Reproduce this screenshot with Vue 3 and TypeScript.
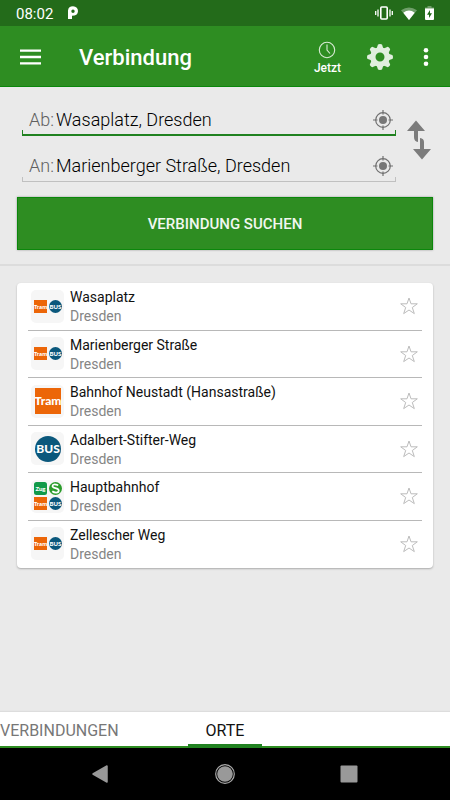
<script setup lang="ts">
import { ref } from 'vue'

type Mode = 'tram' | 'bus' | 'zug' | 'sbahn'

interface Stop {
  name: string
  city: string
  modes: Mode[]
}

const from = ref('Wasaplatz, Dresden')
const to = ref('Marienberger Straße, Dresden')
const tab = ref<'verbindungen' | 'orte'>('orte')

const stops: Stop[] = [
  { name: 'Wasaplatz', city: 'Dresden', modes: ['tram', 'bus'] },
  { name: 'Marienberger Straße', city: 'Dresden', modes: ['tram', 'bus'] },
  { name: 'Bahnhof Neustadt (Hansastraße)', city: 'Dresden', modes: ['tram'] },
  { name: 'Adalbert-Stifter-Weg', city: 'Dresden', modes: ['bus'] },
  { name: 'Hauptbahnhof', city: 'Dresden', modes: ['zug', 'sbahn', 'tram', 'bus'] },
  { name: 'Zellescher Weg', city: 'Dresden', modes: ['tram', 'bus'] },
]

function swap(): void {
  const previous = from.value
  from.value = to.value
  to.value = previous
}
</script>

<template>
  <div class="screen">
    <div class="status">
      <span class="clock">08:02</span>
      <svg class="parking" width="12" height="14" viewBox="0 0 12 14" aria-hidden="true">
        <path fill-rule="evenodd" d="M1 13V4.500Q1.500 .3 6 .3Q11 .7 11 5.300Q10.800 9.800 5 9.800V13ZM6 3.500A1.700 1.700 0 1 0 6 6.900A1.700 1.700 0 1 0 6 3.500Z" fill="#fff" />
      </svg>
      <span class="grow"></span>
      <svg width="18" height="14" viewBox="0 0 18 14" aria-hidden="true">
        <rect x="5.800" y="1" width="6.400" height="12" rx="1" fill="none" stroke="#fff" stroke-width="1.600" />
        <path d="M.7 5v4M3 3.500v7M15 3.500v7M17.300 5v4" stroke="#fff" stroke-width="1.300" />
      </svg>
      <svg class="wifi" width="16" height="13" viewBox="0 0 16 13" aria-hidden="true">
        <path d="M0 3.300Q8-2.300 16 3.300L8 13Z" fill="#fff" opacity=".35" />
        <path d="M2.300 5.800Q8 1.200 13.700 5.800L8 13Z" fill="#fff" />
      </svg>
      <svg width="9" height="14" viewBox="0 0 9 14" aria-hidden="true">
        <path d="M2.500 0H6.500V1.500H9V3H0V1.500H2.500Z" fill="#fff" opacity=".35" />
        <path d="M0 2.500H9V13Q9 14 8 14H1Q0 14 0 13Z" fill="#fff" />
        <path d="M5 4L2 8.800H4V12L7 7.300H5Z" fill="#236b1a" />
      </svg>
    </div>

    <header class="appbar">
      <button class="plain menu" type="button" aria-label="Menü">
        <svg width="22" height="16" viewBox="0 0 22 16"><path d="M0 1.700H21M0 8H21M0 14.300H21" stroke="#fff" stroke-width="2.300" /></svg>
      </button>
      <h1>Verbindung</h1>
      <button class="plain now" type="button">
        <svg width="18" height="18" viewBox="0 0 18 18" fill="none" stroke="#d9ebd6" stroke-width="1.100">
          <circle cx="9" cy="9" r="7.700" /><path d="M9 3.500V9L12 12.500" />
        </svg>
        <span>Jetzt</span>
      </button>
      <button class="plain gear" type="button" aria-label="Einstellungen">
        <svg width="28" height="28" viewBox="-14 -14 28 28">
          <g fill="#e0efde">
            <path v-for="a in 8" :key="a" :transform="`rotate(${a * 45})`" d="M-3.500-8L-2.100-12.200Q-1.800-13 0-13Q1.800-13 2.100-12.200L3.500-8Z" />
            <path fill-rule="evenodd" d="M0-9.800A9.800 9.800 0 1 1 0 9.800A9.800 9.800 0 1 1 0-9.800ZM0-4.500A4.500 4.500 0 1 0 0 4.500A4.500 4.500 0 1 0 0-4.500Z" />
          </g>
        </svg>
      </button>
      <button class="plain more" type="button" aria-label="Mehr">
        <svg width="6" height="20" viewBox="0 0 6 20" fill="#fff"><circle cx="3" cy="3.300" r="2.300" /><circle cx="3" cy="10" r="2.300" /><circle cx="3" cy="16.700" r="2.300" /></svg>
      </button>
    </header>

    <form class="search" @submit.prevent>
      <div class="route">
        <div class="fields">
          <div class="field active">
            <label for="from">Ab:</label>
            <input id="from" v-model="from" type="text" />
            <button class="plain" type="button" aria-label="Aktueller Standort als Start">
              <svg width="20" height="20" viewBox="0 0 20 20"><circle cx="10" cy="10" r="7.300" fill="none" stroke="#707070" stroke-width="1.200" /><circle cx="10" cy="10" r="4" fill="#777" /><path d="M10 0v4.500M10 15.500V20M0 10h4.500M15.500 10H20" stroke="#707070" stroke-width="1.200" /></svg>
            </button>
          </div>
          <div class="field">
            <label for="to">An:</label>
            <input id="to" v-model="to" type="text" />
            <button class="plain" type="button" aria-label="Aktueller Standort als Ziel">
              <svg width="20" height="20" viewBox="0 0 20 20"><circle cx="10" cy="10" r="7.300" fill="none" stroke="#707070" stroke-width="1.200" /><circle cx="10" cy="10" r="4" fill="#777" /><path d="M10 0v4.500M10 15.500V20M0 10h4.500M15.500 10H20" stroke="#707070" stroke-width="1.200" /></svg>
            </button>
          </div>
        </div>
        <button class="plain swap" type="button" aria-label="Start und Ziel tauschen" @click="swap">
          <svg width="24" height="40" viewBox="0 0 24 40" fill="#7c7c7c">
            <path d="M9 .5L18 11H11V22Q7 21.500 7 17V11H0Z" />
            <path d="M13 18Q17 18.500 17 22V29H24L15 39.500L6 29H13Z" />
          </svg>
        </button>
      </div>
      <button class="submit" type="submit">VERBINDUNG SUCHEN</button>
    </form>

    <main>
      <ul class="card">
        <li v-for="stop in stops" :key="stop.name">
          <span class="badge" :class="{ single: stop.modes.length === 1 }">
            <svg v-for="mode in stop.modes" :key="mode" viewBox="0 0 26 26" role="img" :aria-label="mode">
              <template v-if="mode === 'tram'">
                <rect width="26" height="26" fill="#ec6608" />
                <text x="13" y="17">Tram</text>
              </template>
              <template v-else-if="mode === 'bus'">
                <circle cx="13" cy="13" r="13" fill="#0b587c" />
                <text x="13" y="17">BUS</text>
              </template>
              <template v-else-if="mode === 'zug'">
                <rect width="26" height="26" rx="5" fill="#119949" />
                <text x="13" y="17">Zug</text>
              </template>
              <template v-else>
                <circle cx="13" cy="13" r="13" fill="#2b9c2b" />
                <path d="M18.500 6.500Q7 2.500 7 8.500C7 13 19.500 11.500 19.500 17C19.500 22.500 11 22 6.500 18.500" fill="none" stroke="#fff" stroke-width="3.500" />
              </template>
            </svg>
          </span>
          <span class="place">
            <span class="name">{{ stop.name }}</span>
            <span class="city">{{ stop.city }}</span>
          </span>
          <button class="plain star" type="button" :aria-label="`${stop.name} merken`">
            <svg width="18" height="18" viewBox="0 0 18 18"><path d="M9 1L11 6.800H17.300L12.300 10.500L14.300 16.600L9 13L3.700 16.600L5.700 10.500L.7 6.800H7Z" fill="none" stroke="#bcbcbc" stroke-width="1" /></svg>
          </button>
        </li>
      </ul>
    </main>

    <div class="tabs" role="tablist">
      <button type="button" role="tab" class="first" :class="{ selected: tab === 'verbindungen' }" :aria-selected="tab === 'verbindungen'" @click="tab = 'verbindungen'">VERBINDUNGEN</button>
      <button type="button" role="tab" :class="{ selected: tab === 'orte' }" :aria-selected="tab === 'orte'" @click="tab = 'orte'">ORTE</button>
    </div>

    <nav class="system">
      <button class="plain" type="button" aria-label="Zurück">
        <svg width="18" height="20" viewBox="0 0 18 20"><path d="M15 2V18L1 10Z" fill="#999" stroke="#999" stroke-width="1.500" stroke-linejoin="round" /></svg>
      </button>
      <button class="plain" type="button" aria-label="Startseite">
        <svg width="20" height="20" viewBox="0 0 20 20"><circle cx="10" cy="10" r="9.300" fill="none" stroke="#aaa" stroke-width="1.200" /><circle cx="10" cy="10" r="7.800" fill="#999" /></svg>
      </button>
      <button class="plain" type="button" aria-label="Übersicht">
        <svg width="18" height="18" viewBox="0 0 18 18"><rect x=".5" y=".5" width="17" height="17" rx="1" fill="#999" /></svg>
      </button>
    </nav>
  </div>
</template>

<style>
body {
  margin: 0;
}
</style>

<style scoped>
.screen {
  display: flex;
  flex-direction: column;
  min-height: 100vh;
  background: #eaeaea;
  font-family: Roboto, "Liberation Sans", sans-serif;
  color: #111;
}
.screen * {
  box-sizing: border-box;
}
svg {
  display: block;
  flex: none;
}
button,
input {
  font: inherit;
  color: inherit;
  border: 0;
  outline: 0;
  padding: 0;
  margin: 0;
  background: none;
  border-radius: 0;
}
.plain {
  display: flex;
  align-items: center;
  justify-content: center;
  flex: none;
}
.grow {
  flex: 1;
}
.status {
  display: flex;
  align-items: center;
  height: 26px;
  padding: 0 16px;
  background: #236b1a;
  color: #fff;
  font-size: 15px;
}
.clock {
  line-height: 26px;
  padding-top: 2px;
}
.parking {
  margin-left: 14px;
}
.wifi {
  margin: 0 8px;
}
.appbar {
  display: flex;
  align-items: center;
  height: 61px;
  padding: 2px 20px 0;
  background: #2e8d22;
  border-bottom: 1px solid #0b870b;
  color: #fff;
}
h1 {
  flex: 1;
  margin: 0;
  padding: 2px 0 0 37px;
  font-size: 22px;
  line-height: 28px;
  font-weight: 500;
}
.now {
  flex-direction: column;
  gap: 2px;
  padding-top: 2px;
  font-size: 12px;
  line-height: 14px;
  font-weight: 500;
}
.gear {
  margin: 0 28px 0 25px;
}
.more {
  padding: 0 1px;
}
.search {
  padding: 17px 17px 14px;
  border-bottom: 2px solid #dcdcdc;
}
.route {
  display: flex;
  align-items: center;
  gap: 11px;
  padding: 0 2px 0 5px;
}
.fields {
  flex: 1;
  min-width: 0;
  display: flex;
  flex-direction: column;
  gap: 14px;
}
.field {
  position: relative;
  display: flex;
  align-items: center;
  height: 32px;
  padding: 0 3px 0 7px;
  border-bottom: 1px solid #c0c0c0;
  font-size: 18px;
}
.field::after {
  content: "";
  position: absolute;
  inset: auto 0 0;
  height: 4px;
  border: solid #c0c0c0;
  border-width: 0 1px;
  pointer-events: none;
}
.field.active {
  padding-top: 1px;
  border-bottom: 2px solid #208220;
}
.field.active::after {
  border-color: #208220;
}
.field label {
  color: #606060;
  font-weight: 300;
}
.field input {
  flex: 1;
  min-width: 0;
  height: 28px;
  margin-left: 2px;
  color: #000;
  font-weight: 300;
}
.swap {
  padding-bottom: 7px;
}
.submit {
  display: block;
  width: 100%;
  height: 53px;
  margin-top: 15px;
  background: #2e8d22;
  border: 1px solid #0b870b;
  box-shadow: 0 0 2px #999;
  color: #f1f7f0;
  font-size: 15px;
  font-weight: 500;
}
main {
  flex: 1;
  padding: 17px 17px 16px;
}
.card {
  display: grid;
  grid-auto-rows: 1fr;
  min-height: 285px;
  margin: 0;
  padding: 0 11px;
  list-style: none;
  background: #fff;
  border-radius: 4px;
  box-shadow: 0 1px 2px #aaa;
}
.card li {
  display: flex;
  align-items: center;
  gap: 6px;
  padding: 0 4px 0 3px;
  border-bottom: 1px solid #b8b8b8;
}
.card li:last-child {
  border-bottom-color: transparent;
}
.badge {
  display: grid;
  grid-template-columns: 13px 13px;
  gap: 2px;
  place-content: center;
  width: 33px;
  height: 33px;
  border-radius: 5px;
  background: #f6f6f6;
}
.badge.single {
  grid-template-columns: 26px;
}
.badge text {
  font-family: Lato, "Noto Sans", sans-serif;
  font-size: 12px;
  font-weight: 900;
  fill: #fff;
  text-anchor: middle;
}
.place {
  flex: 1;
  display: flex;
  flex-direction: column;
  padding-top: 2px;
  font-size: 14px;
  line-height: 19px;
}
.city {
  color: #858585;
}
.tabs {
  display: flex;
  height: 36px;
  background: #fff;
  box-shadow: inset 0 -2px #2e8d22, 0 -1px 1px #ddd;
}
.tabs button {
  padding: 4px 18px 0;
  border-bottom: 4px solid transparent;
  font-size: 16px;
  color: #777;
}
.tabs .first {
  padding-left: 0;
  margin-right: 51px;
}
.tabs .selected {
  border-bottom-color: #208220;
  color: #111;
}
.system {
  display: flex;
  align-items: center;
  justify-content: center;
  gap: 105px;
  height: 52px;
  background: #000;
}
</style>
